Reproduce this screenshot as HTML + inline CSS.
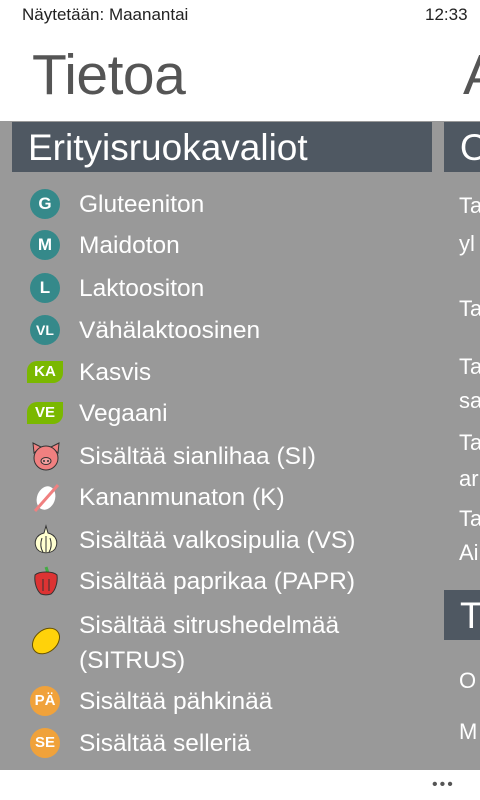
<!DOCTYPE html>
<html><head><meta charset="utf-8"><style>
*{margin:0;padding:0;box-sizing:border-box}
body{width:480px;height:800px;overflow:hidden;background:#fff;font-family:"Liberation Sans","DejaVu Sans",sans-serif;position:relative}
.a{position:absolute;white-space:nowrap}
#bg{position:absolute;left:0;top:121px;width:480px;height:649px;background:#999}
.hd{position:absolute;top:122px;height:50px;background:#4f5862;color:#fff;font-size:37px;line-height:52px;padding-left:16px;overflow:hidden;white-space:nowrap}
.t{position:absolute;left:79px;color:#fff;font-size:24.5px;line-height:28px;white-space:nowrap}
.r{position:absolute;left:459px;color:#fff;font-size:22px;line-height:26px}
.ic{position:absolute;left:30px;width:30px;height:30px;border-radius:50%;color:#fff;font-weight:bold;text-align:center;line-height:30px;font-size:17px}
.tl{background:#35898a}.or{background:#f0a23b}
.lf{position:absolute;left:27px;width:36px;height:22px;background:#7ab800;border-radius:10px 0 10px 0;color:#fff;font-weight:bold;font-size:15px;line-height:22px;text-align:center}
</style></head><body>
<div class="a" style="left:22px;top:5px;font-size:17px;color:#222">Näytetään: Maanantai</div>
<div class="a" style="left:425px;top:5px;font-size:17px;color:#222">12:33</div>
<div class="a" style="left:32px;top:42px;font-size:57px;color:#555;letter-spacing:-0.5px">Tietoa</div>
<div class="a" style="left:463px;top:42px;font-size:57px;color:#555">A</div>
<div id="bg"></div>
<div class="hd" style="left:12px;width:420px">Erityisruokavaliot</div>
<div class="hd" style="left:444px;width:40px">O</div>
<div class="hd" style="left:444px;width:40px;top:590px">To</div>

<div class="ic tl" style="top:189px">G</div><div class="t" style="top:191px">Gluteeniton</div>
<div class="ic tl" style="top:230px">M</div><div class="t" style="top:232px">Maidoton</div>
<div class="ic tl" style="top:273px">L</div><div class="t" style="top:275px">Laktoositon</div>
<div class="ic tl" style="top:315px;font-size:14px">VL</div><div class="t" style="top:317px">Vähälaktoosinen</div>
<div class="lf" style="top:361px">KA</div><div class="t" style="top:359px">Kasvis</div>
<div class="lf" style="top:402px">VE</div><div class="t" style="top:400px">Vegaani</div>
<svg class="a" style="left:30px;top:441px" width="32" height="30" viewBox="0 0 32 30"><path d="M3 2 L11 6 L4 12Z M29 2 L21 6 L28 12Z" fill="#f08080" stroke="#333" stroke-width="1"/><circle cx="16" cy="17" r="12" fill="#f08080" stroke="#333"/><ellipse cx="16" cy="20" rx="5" ry="3.5" fill="#f4a0a0" stroke="#333"/><circle cx="14" cy="20" r="1" fill="#333"/><circle cx="18" cy="20" r="1" fill="#333"/></svg>
<div class="t" style="top:443px">Sisältää sianlihaa (SI)</div>
<svg class="a" style="left:31px;top:483px" width="30" height="30" viewBox="0 0 30 30"><ellipse cx="15" cy="15" rx="9" ry="12" fill="#fff" transform="rotate(20 15 15)"/><line x1="27" y1="2" x2="4" y2="28" stroke="#f08080" stroke-width="3"/></svg>
<div class="t" style="top:484px">Kananmunaton (K)</div>
<svg class="a" style="left:31px;top:524px" width="30" height="32" viewBox="0 0 30 32"><path d="M15 2 L17 9 C25 11 28 18 24 25 C20 30 10 30 6 25 C2 18 5 11 13 9Z" fill="#ffffd0" stroke="#333"/><path d="M15 12 V28 M11 14 C9 20 10 25 12 28 M19 14 C21 20 20 25 18 28" stroke="#333" fill="none"/></svg>
<div class="t" style="top:527px">Sisältää valkosipulia (VS)</div>
<svg class="a" style="left:31px;top:565px" width="30" height="32" viewBox="0 0 30 32"><path d="M15 2 L17 8" stroke="#4a4" stroke-width="3"/><path d="M4 10 C8 6 22 6 26 10 C27 18 24 26 20 29 C17 30 13 30 10 29 C6 26 3 18 4 10Z" fill="#d33" stroke="#333"/><path d="M12 14 V26 M18 14 V26" stroke="#333"/></svg>
<div class="t" style="top:568px">Sisältää paprikaa (PAPR)</div>
<svg class="a" style="left:30px;top:625px" width="32" height="32" viewBox="0 0 32 32"><ellipse cx="16" cy="16" rx="15" ry="11" transform="rotate(-40 16 16)" fill="#ffd20a" stroke="#665000"/></svg>
<div class="t" style="top:612px">Sisältää sitrushedelmää</div>
<div class="t" style="top:647px">(SITRUS)</div>
<div class="ic or" style="top:686px;font-size:15px">PÄ</div><div class="t" style="top:688px">Sisältää pähkinää</div>
<div class="ic or" style="top:728px;font-size:15px">SE</div><div class="t" style="top:730px">Sisältää selleriä</div>

<div class="r" style="top:193px">Ta</div>
<div class="r" style="top:231px">yl</div>
<div class="r" style="top:296px">Ta</div>
<div class="r" style="top:354px">Ta</div>
<div class="r" style="top:388px">sa</div>
<div class="r" style="top:430px">Ta</div>
<div class="r" style="top:466px">ar</div>
<div class="r" style="top:506px">Ta</div>
<div class="r" style="top:540px">Ai</div>
<div class="r" style="top:668px">O</div>
<div class="r" style="top:719px">M</div>
<div class="a" style="left:432px;top:776px;font-size:16px;color:#555;letter-spacing:2px">•••</div>
</body></html>
